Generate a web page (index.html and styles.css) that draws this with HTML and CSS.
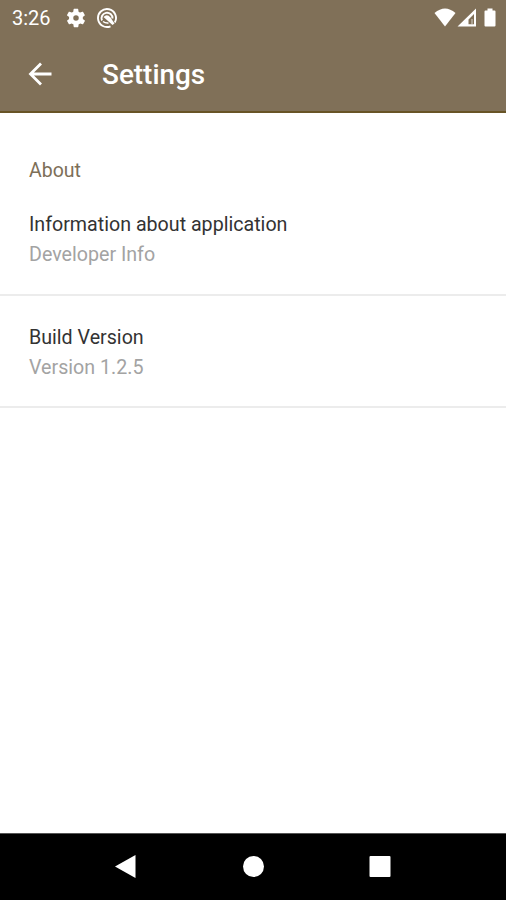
FILE: index.html
```html
<!DOCTYPE html>
<html lang="en">
<head>
<meta charset="utf-8">
<title>Settings</title>
<link rel="stylesheet" href="styles.css">
</head>
<body>
<header class="top">
  <div class="status">
    <span class="time">3:26</span>
    <svg class="gear" width="22" height="22" viewBox="0 0 24 24" fill="#fff"><path d="M19.4 13c.1-.3.1-.6.1-1s0-.7-.1-1l2.100-1.600c.2-.2.200-.4.100-.6l-2-3.500c-.1-.2-.4-.3-.6-.2l-2.500 1c-.5-.4-1.100-.7-1.700-1l-.4-2.600c0-.3-.2-.5-.5-.5h-4c-.3 0-.5.200-.5.5l-.4 2.600c-.6.3-1.200.6-1.700 1l-2.500-1c-.2-.1-.5 0-.6.2l-2 3.500c-.1.2-.1.5.1.600L4.500 11c0 .3-.1.600-.1 1s0 .7.100 1l-2.100 1.600c-.2.200-.2.400-.1.600l2 3.500c.1.200.4.300.6.200l2.500-1c.5.400 1.100.7 1.700 1l.4 2.600c0 .3.200.5.500.5h4c.3 0 .5-.2.500-.5l.4-2.600c.6-.3 1.200-.6 1.700-1l2.500 1c.2.100.5 0 .6-.2l2-3.500c.1-.2.100-.5-.1-.600zM12 15a3 3 0 1 1 0-6 3 3 0 0 1 0 6z"/></svg>
    <svg class="badge" width="22" height="22" viewBox="0 0 22 22" fill="none" stroke="#fff" stroke-width="1.900"><path d="M14.500 19.300A9 9 0 1 1 18.800 15.500"/><path d="M6 13.500A5.500 5.500 0 1 1 16.500 11.500"/><path fill="#fff" stroke="none" d="M7.500 10Q11 6.500 14.500 10.500L18.500 16.500 16.500 18z"/><path stroke-width="1.500" d="M7 14.500Q9.500 16.500 12.500 16"/></svg>
    <svg class="system" width="64" height="20" viewBox="0 0 64 20" fill="#fff"><path d="M.5 5Q11-4 21.500 5L11 18.500z"/><path fill-rule="evenodd" d="M42 .5v18H23.500zM40 6l-5.500 5.500v4.800H40z"/><path opacity=".35" d="M37 11h2v5h-2z"/><path d="M51.500 2.500h2V.5h5v2h2q1 0 1 1v14q0 1-1 1h-9q-1 0-1-1v-14q0-1 1-1z"/></svg>
  </div>
  <div class="toolbar">
    <svg class="back" width="24" height="24" viewBox="0 0 24 24" fill="none" stroke="#fff" stroke-width="2.800"><path d="M23.500 12H3M13 1.500L2.500 12 13 22.500"/></svg>
    <h1>Settings</h1>
  </div>
</header>
<main>
  <h2>About</h2>
  <section class="row"><div class="title">Information about application</div><div class="sub">Developer Info</div></section>
  <section class="row second"><div class="title">Build Version</div><div class="sub">Version 1.2.5</div></section>
</main>
<nav>
  <svg width="506" height="67" viewBox="0 0 506 67" fill="#fff"><path d="M115 33.500L135.500 22v23z"/><circle cx="253.500" cy="33.500" r="10.500"/><rect x="369.500" y="23" width="21" height="21" rx="1"/></svg>
</nav>
</body>
</html>
```
FILE: styles.css
```css
* { box-sizing: border-box; }
body { margin: 0; height: 900px; display: flex; flex-direction: column; background: #fff; font-family: Roboto, sans-serif; overflow: hidden; }
.top { height: 113px; background: #807058; border-bottom: 2px solid #685426; color: #fff; }
.status { height: 36px; display: flex; align-items: center; padding: 0 8px 0 12px; }
.time { width: 53px; font-size: 20px; }
.badge { margin-left: 9px; }
.system { margin-left: auto; }
.toolbar { height: 76px; display: flex; align-items: center; padding-left: 28px; }
h1 { margin: 2px 0 0 50px; font-size: 27.900px; font-weight: 500; line-height: 32px; }
main { flex: 1; }
h2 { margin: 46px 0 0 29px; font-size: 19.500px; line-height: 24px; font-weight: 400; color: #7d6f58; }
.row { margin-top: 27px; height: 86px; padding-left: 29px; border-bottom: 2px solid #ececec; font-size: 19.650px; line-height: 30px; }
.second { height: 85px; }
.title { color: #333; }
.sub { color: #a3a3a3; }
nav { height: 67px; background: #000; border-top: 1px solid #555; }
nav svg { display: block; margin-top: -1px; }
```
